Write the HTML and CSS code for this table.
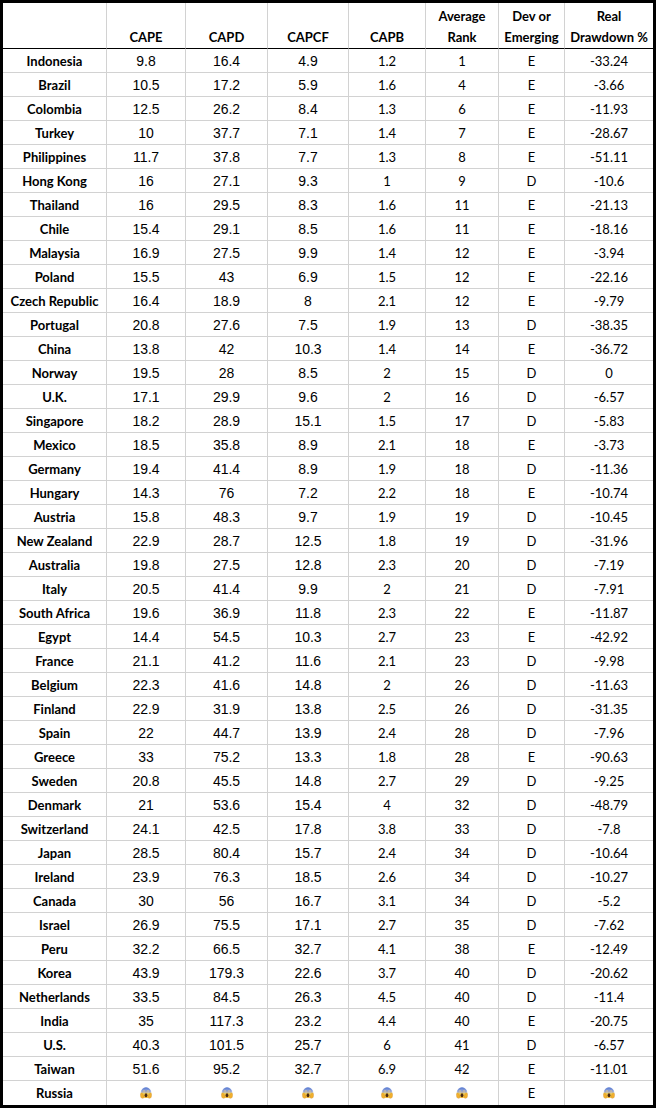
FILE: index.html
```html
<!DOCTYPE html>
<html>
<head>
<meta charset="utf-8">
<link rel="stylesheet" href="styles.css">
</head>
<body>
<svg class="defs" width="0" height="0" aria-hidden="true">
  <defs>
    <linearGradient id="scream-face" x1="0" y1="0" x2="0" y2="1">
      <stop offset="0" stop-color="#4f74d0"/>
      <stop offset="0.42" stop-color="#a9b6e2"/>
      <stop offset="0.58" stop-color="#f8d65c"/>
      <stop offset="1" stop-color="#f1b22c"/>
    </linearGradient>
    <symbol id="scream" viewBox="0 0 36 36">
      <circle cx="18" cy="17" r="16" fill="url(#scream-face)"/>
      <ellipse cx="12" cy="14" rx="3.6" ry="4.4" fill="#fff" stroke="#6b4a1f" stroke-width="0.8"/>
      <ellipse cx="24" cy="14" rx="3.6" ry="4.4" fill="#fff" stroke="#6b4a1f" stroke-width="0.8"/>
      <circle cx="12" cy="14.5" r="1.6" fill="#3a2a18"/>
      <circle cx="24" cy="14.5" r="1.6" fill="#3a2a18"/>
      <ellipse cx="18" cy="25" rx="4.2" ry="6" fill="#4a2a14"/>
      <path d="M1.5 20 C4 18 8 19 10 23 L11 33 C8 35 4 34 2.5 31 C1 27 1 23 1.5 20 Z" fill="#f3b02c" stroke="#b9791a" stroke-width="0.8"/>
      <path d="M34.5 20 C32 18 28 19 26 23 L25 33 C28 35 32 34 33.5 31 C35 27 35 23 34.5 20 Z" fill="#f3b02c" stroke="#b9791a" stroke-width="0.8"/>
    </symbol>
  </defs>
</svg>
<div class="sheet">
<table class="grid">
  <thead>
    <tr>
      <th class="c-country"></th>
      <th class="c-cape">CAPE</th>
      <th class="c-capd">CAPD</th>
      <th class="c-capcf">CAPCF</th>
      <th class="c-capb">CAPB</th>
      <th class="c-rank">Average<br>Rank</th>
      <th class="c-dev">Dev or<br>Emerging</th>
      <th class="c-dd">Real<br>Drawdown %</th>
    </tr>
  </thead>
  <tbody>
    <tr><td class="name">Indonesia</td><td class="num">9.8</td><td class="num">16.4</td><td class="num">4.9</td><td class="cal">1.2</td><td class="cal">1</td><td class="cal">E</td><td class="cal">-33.24</td></tr>
    <tr><td class="name">Brazil</td><td class="num">10.5</td><td class="num">17.2</td><td class="num">5.9</td><td class="cal">1.6</td><td class="cal">4</td><td class="cal">E</td><td class="cal">-3.66</td></tr>
    <tr><td class="name">Colombia</td><td class="num">12.5</td><td class="num">26.2</td><td class="num">8.4</td><td class="cal">1.3</td><td class="cal">6</td><td class="cal">E</td><td class="cal">-11.93</td></tr>
    <tr><td class="name">Turkey</td><td class="num">10</td><td class="num">37.7</td><td class="num">7.1</td><td class="cal">1.4</td><td class="cal">7</td><td class="cal">E</td><td class="cal">-28.67</td></tr>
    <tr><td class="name">Philippines</td><td class="num">11.7</td><td class="num">37.8</td><td class="num">7.7</td><td class="cal">1.3</td><td class="cal">8</td><td class="cal">E</td><td class="cal">-51.11</td></tr>
    <tr><td class="name">Hong Kong</td><td class="num">16</td><td class="num">27.1</td><td class="num">9.3</td><td class="cal">1</td><td class="cal">9</td><td class="cal">D</td><td class="cal">-10.6</td></tr>
    <tr><td class="name">Thailand</td><td class="num">16</td><td class="num">29.5</td><td class="num">8.3</td><td class="cal">1.6</td><td class="cal">11</td><td class="cal">E</td><td class="cal">-21.13</td></tr>
    <tr><td class="name">Chile</td><td class="num">15.4</td><td class="num">29.1</td><td class="num">8.5</td><td class="cal">1.6</td><td class="cal">11</td><td class="cal">E</td><td class="cal">-18.16</td></tr>
    <tr><td class="name">Malaysia</td><td class="num">16.9</td><td class="num">27.5</td><td class="num">9.9</td><td class="cal">1.4</td><td class="cal">12</td><td class="cal">E</td><td class="cal">-3.94</td></tr>
    <tr><td class="name">Poland</td><td class="num">15.5</td><td class="num">43</td><td class="num">6.9</td><td class="cal">1.5</td><td class="cal">12</td><td class="cal">E</td><td class="cal">-22.16</td></tr>
    <tr><td class="name">Czech Republic</td><td class="num">16.4</td><td class="num">18.9</td><td class="num">8</td><td class="cal">2.1</td><td class="cal">12</td><td class="cal">E</td><td class="cal">-9.79</td></tr>
    <tr><td class="name">Portugal</td><td class="num">20.8</td><td class="num">27.6</td><td class="num">7.5</td><td class="cal">1.9</td><td class="cal">13</td><td class="cal">D</td><td class="cal">-38.35</td></tr>
    <tr><td class="name">China</td><td class="num">13.8</td><td class="num">42</td><td class="num">10.3</td><td class="cal">1.4</td><td class="cal">14</td><td class="cal">E</td><td class="cal">-36.72</td></tr>
    <tr><td class="name">Norway</td><td class="num">19.5</td><td class="num">28</td><td class="num">8.5</td><td class="cal">2</td><td class="cal">15</td><td class="cal">D</td><td class="cal">0</td></tr>
    <tr><td class="name">U.K.</td><td class="num">17.1</td><td class="num">29.9</td><td class="num">9.6</td><td class="cal">2</td><td class="cal">16</td><td class="cal">D</td><td class="cal">-6.57</td></tr>
    <tr><td class="name">Singapore</td><td class="num">18.2</td><td class="num">28.9</td><td class="num">15.1</td><td class="cal">1.5</td><td class="cal">17</td><td class="cal">D</td><td class="cal">-5.83</td></tr>
    <tr><td class="name">Mexico</td><td class="num">18.5</td><td class="num">35.8</td><td class="num">8.9</td><td class="cal">2.1</td><td class="cal">18</td><td class="cal">E</td><td class="cal">-3.73</td></tr>
    <tr><td class="name">Germany</td><td class="num">19.4</td><td class="num">41.4</td><td class="num">8.9</td><td class="cal">1.9</td><td class="cal">18</td><td class="cal">D</td><td class="cal">-11.36</td></tr>
    <tr><td class="name">Hungary</td><td class="num">14.3</td><td class="num">76</td><td class="num">7.2</td><td class="cal">2.2</td><td class="cal">18</td><td class="cal">E</td><td class="cal">-10.74</td></tr>
    <tr><td class="name">Austria</td><td class="num">15.8</td><td class="num">48.3</td><td class="num">9.7</td><td class="cal">1.9</td><td class="cal">19</td><td class="cal">D</td><td class="cal">-10.45</td></tr>
    <tr><td class="name">New Zealand</td><td class="num">22.9</td><td class="num">28.7</td><td class="num">12.5</td><td class="cal">1.8</td><td class="cal">19</td><td class="cal">D</td><td class="cal">-31.96</td></tr>
    <tr><td class="name">Australia</td><td class="num">19.8</td><td class="num">27.5</td><td class="num">12.8</td><td class="cal">2.3</td><td class="cal">20</td><td class="cal">D</td><td class="cal">-7.19</td></tr>
    <tr><td class="name">Italy</td><td class="num">20.5</td><td class="num">41.4</td><td class="num">9.9</td><td class="cal">2</td><td class="cal">21</td><td class="cal">D</td><td class="cal">-7.91</td></tr>
    <tr><td class="name">South Africa</td><td class="num">19.6</td><td class="num">36.9</td><td class="num">11.8</td><td class="cal">2.3</td><td class="cal">22</td><td class="cal">E</td><td class="cal">-11.87</td></tr>
    <tr><td class="name">Egypt</td><td class="num">14.4</td><td class="num">54.5</td><td class="num">10.3</td><td class="cal">2.7</td><td class="cal">23</td><td class="cal">E</td><td class="cal">-42.92</td></tr>
    <tr><td class="name">France</td><td class="num">21.1</td><td class="num">41.2</td><td class="num">11.6</td><td class="cal">2.1</td><td class="cal">23</td><td class="cal">D</td><td class="cal">-9.98</td></tr>
    <tr><td class="name">Belgium</td><td class="num">22.3</td><td class="num">41.6</td><td class="num">14.8</td><td class="cal">2</td><td class="cal">26</td><td class="cal">D</td><td class="cal">-11.63</td></tr>
    <tr><td class="name">Finland</td><td class="num">22.9</td><td class="num">31.9</td><td class="num">13.8</td><td class="cal">2.5</td><td class="cal">26</td><td class="cal">D</td><td class="cal">-31.35</td></tr>
    <tr><td class="name">Spain</td><td class="num">22</td><td class="num">44.7</td><td class="num">13.9</td><td class="cal">2.4</td><td class="cal">28</td><td class="cal">D</td><td class="cal">-7.96</td></tr>
    <tr><td class="name">Greece</td><td class="num">33</td><td class="num">75.2</td><td class="num">13.3</td><td class="cal">1.8</td><td class="cal">28</td><td class="cal">E</td><td class="cal">-90.63</td></tr>
    <tr><td class="name">Sweden</td><td class="num">20.8</td><td class="num">45.5</td><td class="num">14.8</td><td class="cal">2.7</td><td class="cal">29</td><td class="cal">D</td><td class="cal">-9.25</td></tr>
    <tr><td class="name">Denmark</td><td class="num">21</td><td class="num">53.6</td><td class="num">15.4</td><td class="cal">4</td><td class="cal">32</td><td class="cal">D</td><td class="cal">-48.79</td></tr>
    <tr><td class="name">Switzerland</td><td class="num">24.1</td><td class="num">42.5</td><td class="num">17.8</td><td class="cal">3.8</td><td class="cal">33</td><td class="cal">D</td><td class="cal">-7.8</td></tr>
    <tr><td class="name">Japan</td><td class="num">28.5</td><td class="num">80.4</td><td class="num">15.7</td><td class="cal">2.4</td><td class="cal">34</td><td class="cal">D</td><td class="cal">-10.64</td></tr>
    <tr><td class="name">Ireland</td><td class="num">23.9</td><td class="num">76.3</td><td class="num">18.5</td><td class="cal">2.6</td><td class="cal">34</td><td class="cal">D</td><td class="cal">-10.27</td></tr>
    <tr><td class="name">Canada</td><td class="num">30</td><td class="num">56</td><td class="num">16.7</td><td class="cal">3.1</td><td class="cal">34</td><td class="cal">D</td><td class="cal">-5.2</td></tr>
    <tr><td class="name">Israel</td><td class="num">26.9</td><td class="num">75.5</td><td class="num">17.1</td><td class="cal">2.7</td><td class="cal">35</td><td class="cal">D</td><td class="cal">-7.62</td></tr>
    <tr><td class="name">Peru</td><td class="num">32.2</td><td class="num">66.5</td><td class="num">32.7</td><td class="cal">4.1</td><td class="cal">38</td><td class="cal">E</td><td class="cal">-12.49</td></tr>
    <tr><td class="name">Korea</td><td class="num">43.9</td><td class="num">179.3</td><td class="num">22.6</td><td class="cal">3.7</td><td class="cal">40</td><td class="cal">D</td><td class="cal">-20.62</td></tr>
    <tr><td class="name">Netherlands</td><td class="num">33.5</td><td class="num">84.5</td><td class="num">26.3</td><td class="cal">4.5</td><td class="cal">40</td><td class="cal">D</td><td class="cal">-11.4</td></tr>
    <tr><td class="name">India</td><td class="num">35</td><td class="num">117.3</td><td class="num">23.2</td><td class="cal">4.4</td><td class="cal">40</td><td class="cal">E</td><td class="cal">-20.75</td></tr>
    <tr><td class="name">U.S.</td><td class="num">40.3</td><td class="num">101.5</td><td class="num">25.7</td><td class="cal">6</td><td class="cal">41</td><td class="cal">D</td><td class="cal">-6.57</td></tr>
    <tr><td class="name">Taiwan</td><td class="num">51.6</td><td class="num">95.2</td><td class="num">32.7</td><td class="cal">6.9</td><td class="cal">42</td><td class="cal">E</td><td class="cal">-11.01</td></tr>
    <tr class="last">
      <td class="name">Russia</td>
      <td class="emo"><svg class="scream" role="img" aria-label="😱"><use href="#scream"/></svg></td>
      <td class="emo"><svg class="scream" role="img" aria-label="😱"><use href="#scream"/></svg></td>
      <td class="emo"><svg class="scream" role="img" aria-label="😱"><use href="#scream"/></svg></td>
      <td class="emo"><svg class="scream" role="img" aria-label="😱"><use href="#scream"/></svg></td>
      <td class="emo"><svg class="scream" role="img" aria-label="😱"><use href="#scream"/></svg></td>
      <td class="cal">E</td>
      <td class="emo"><svg class="scream" role="img" aria-label="😱"><use href="#scream"/></svg></td>
    </tr>
  </tbody>
</table>
</div>
</body>
</html>
```
FILE: styles.css
```css
html, body {
  margin: 0;
  padding: 0;
  background: #ffffff;
}

.defs {
  position: absolute;
  width: 0;
  height: 0;
  overflow: hidden;
}

.sheet {
  width: 656px;
  box-sizing: border-box;
  border: 3px solid #000;
  background: #fff;
}

.grid {
  width: 650px;
  table-layout: fixed;
  border-collapse: separate;
  border-spacing: 0;
  color: #000;
}

.grid th,
.grid td {
  box-sizing: border-box;
  padding: 0;
  text-align: center;
  border-right: 1px solid #d2d2d2;
  border-bottom: 1px solid #d2d2d2;
  white-space: nowrap;
  overflow: hidden;
}

.grid th:last-child,
.grid td:last-child {
  border-right: none;
}

.grid th {
  height: 46px;
  vertical-align: bottom;
  font-family: Lato, "Liberation Sans", sans-serif;
  font-weight: 700;
  font-size: 13px;
  line-height: 21px;
  border-bottom: 1px solid #000;
}

.c-country { width: 104px; }
.c-cape { width: 79px; }
.c-capd { width: 82px; }
.c-capcf { width: 81px; }
.c-capb { width: 77px; }
.c-rank { width: 73px; }
.c-dev { width: 66px; }
.c-dd { width: 88px; }

.grid td {
  height: 24px;
  padding-top: 1px;
  line-height: 22px;
  vertical-align: top;
}

.grid tr.last td {
  height: 22px;
  border-bottom: none;
}

.name {
  font-family: Lato, "Liberation Sans", sans-serif;
  font-weight: 700;
  font-size: 13px;
}

.num {
  font-family: "Liberation Sans", Arial, sans-serif;
  font-size: 14px;
}

.cal {
  font-family: Lato, "Liberation Sans", sans-serif;
  font-size: 13px;
}

.emo {
  line-height: 0;
}

.scream {
  display: inline-block;
  width: 12px;
  height: 12px;
  margin-top: 5px;
}
```
